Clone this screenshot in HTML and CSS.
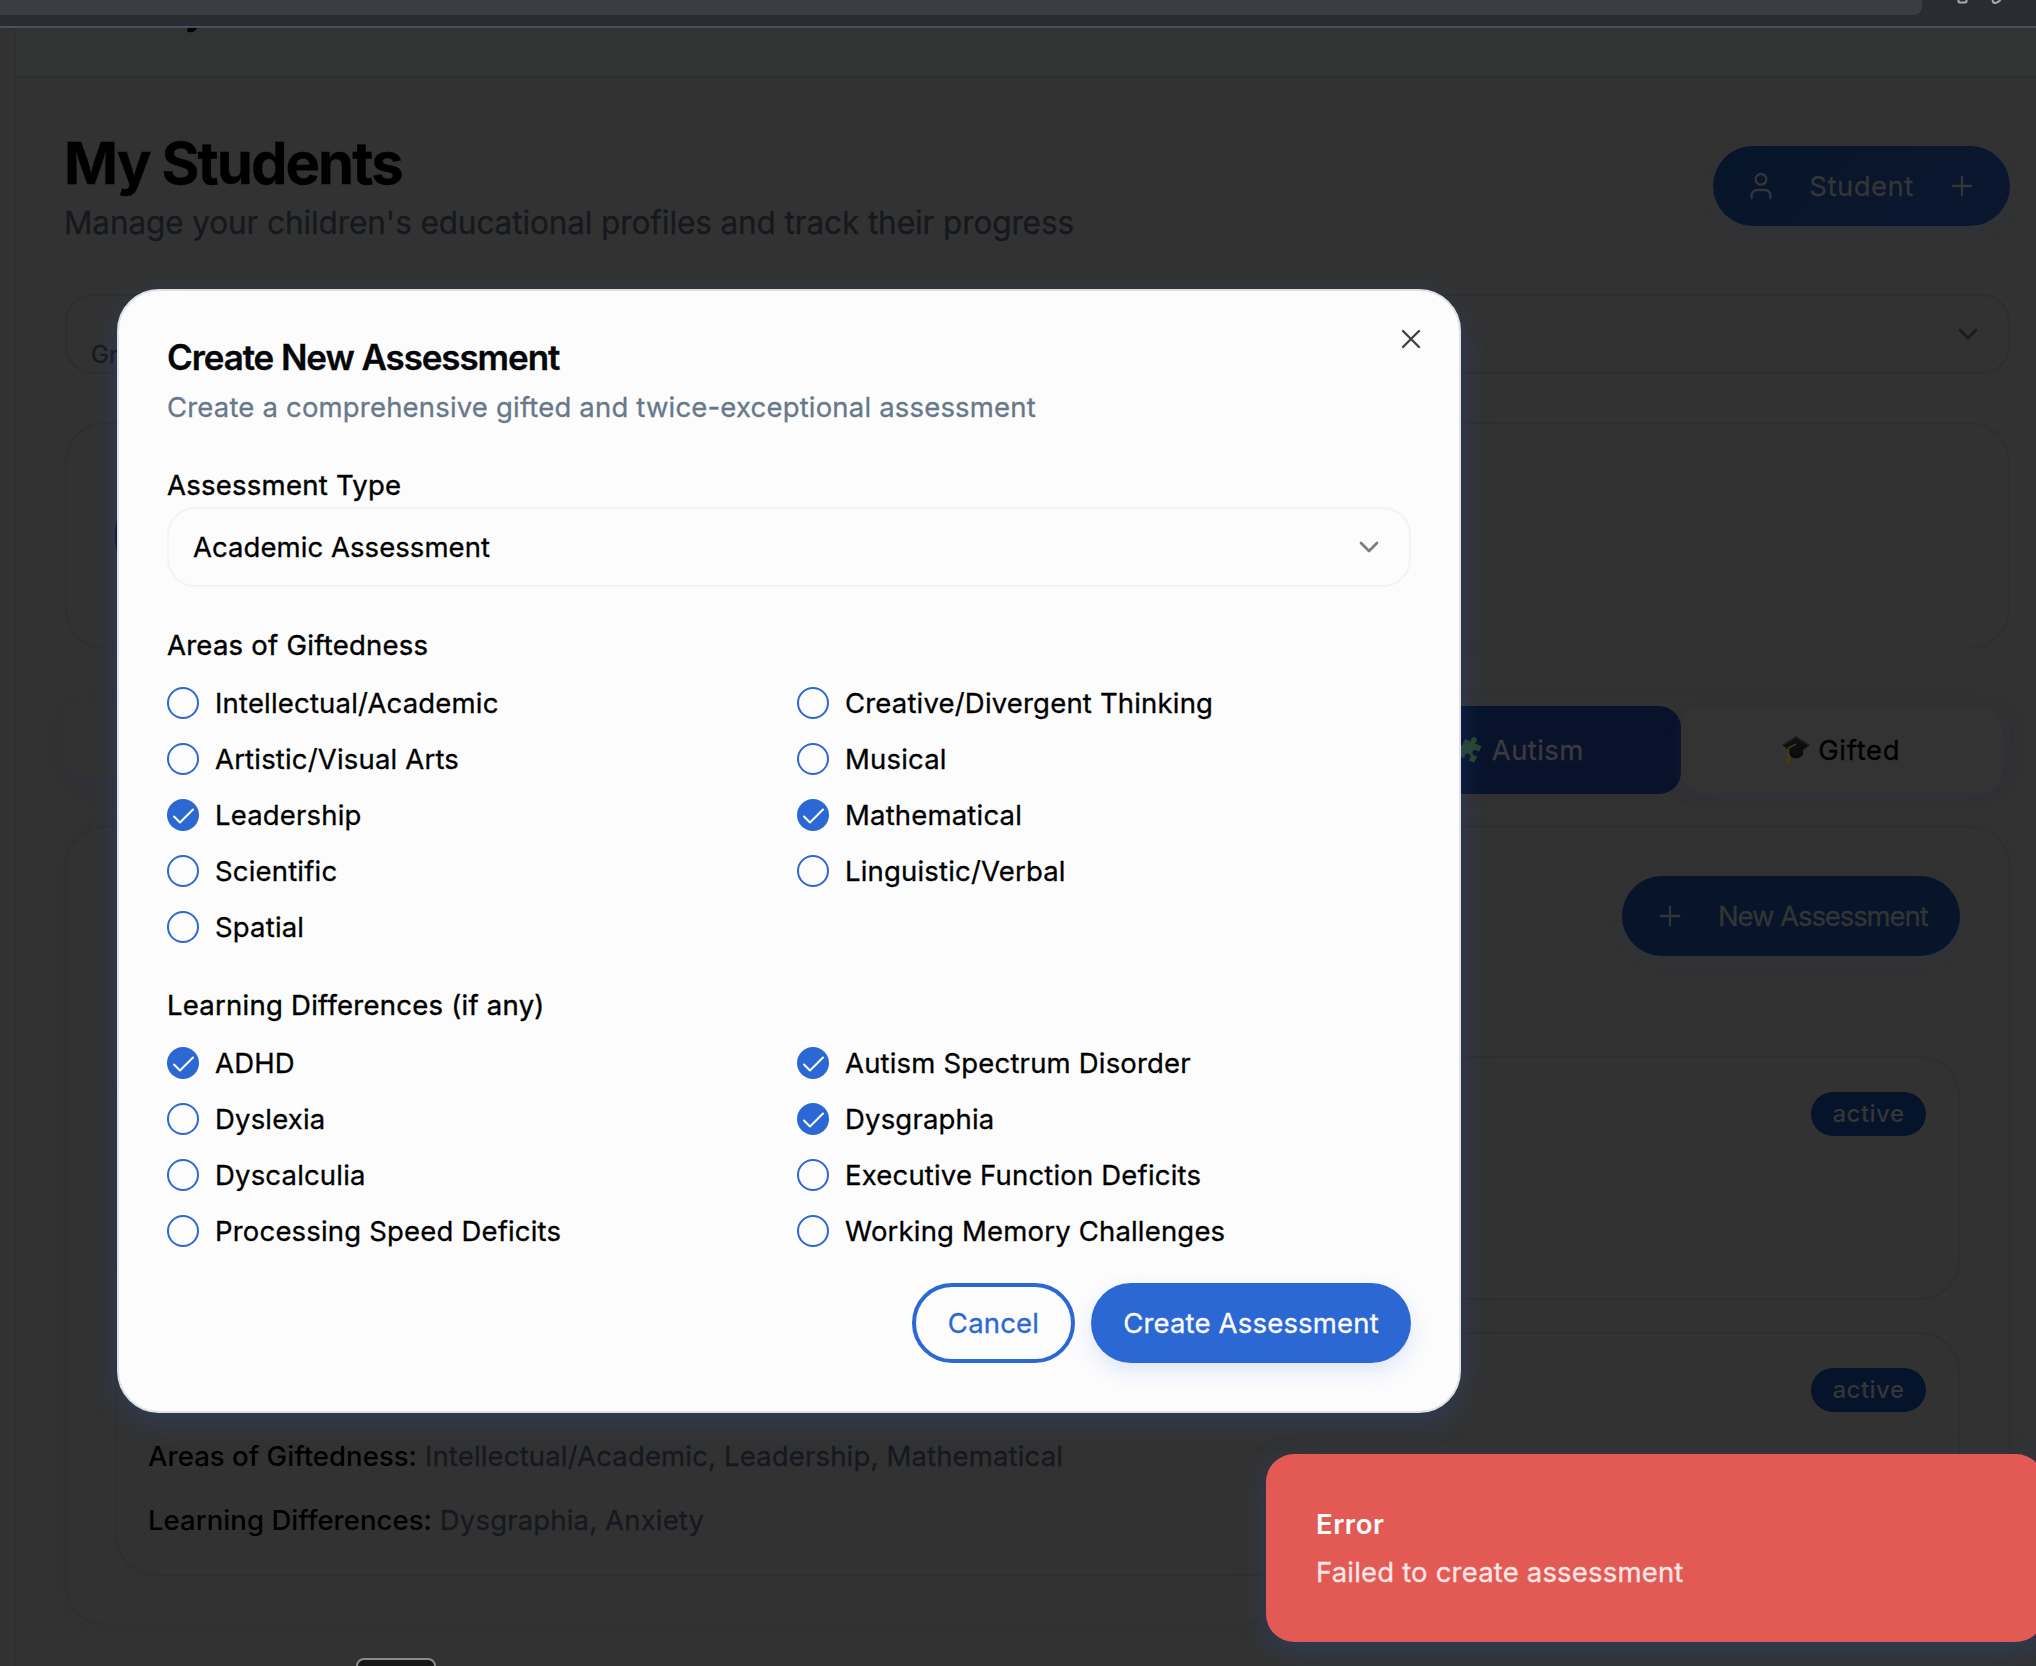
FILE: index.html
```html
<!DOCTYPE html>
<html lang="en">
<head>
<meta charset="utf-8">
<title>My Students</title>
<link rel="stylesheet" href="styles.css">
</head>
<body>
<div class="browser">
  <div class="address"></div>
  <svg class="browser-icon" width="12" height="6" viewBox="0 0 12 6"><path d="M1.5 0v1.5a1 1 0 0 0 1 1h6a1 1 0 0 0 1-1V0"/></svg>
  <svg class="browser-icon" width="12" height="6" viewBox="0 0 12 6"><path d="M1.5 0Q2 3 4 3T9.500 0"/></svg>
</div>
<div class="app">
  <aside class="sidebar"></aside>
  <div class="main">
    <header class="header"><span class="brand">y</span></header>
    <div class="content">
      <div class="heading">
        <div>
          <h1>My Students</h1>
          <p class="lead">Manage your children's educational profiles and track their progress</p>
        </div>
        <div class="pill student-btn">
          <svg class="icon" viewBox="0 0 24 24"><path d="M19 21v-2a4 4 0 0 0-4-4H9a4 4 0 0 0-4 4v2"/><circle cx="12" cy="7" r="4"/></svg>
          <span>Student</span>
          <svg class="icon" viewBox="0 0 24 24"><path d="M5 12h14M12 5v14"/></svg>
        </div>
      </div>
      <div class="student-select">
        <span>Grade</span>
        <svg class="icon chevron" viewBox="0 0 24 24"><path d="m6 9 6 6 6-6"/></svg>
      </div>
      <div class="card profile"><div class="avatar"></div></div>
      <div class="tabs">
        <div class="tab"></div><div class="tab"></div><div class="tab"></div><div class="tab"></div>
        <div class="tab active">
          <svg class="emoji" viewBox="0 0 28 28"><g class="puzzle"><path transform="rotate(24 14 14)" d="M5 6h6.500c-1.800-2-1-5.500 2-5.500s3.800 3.500 2 5.500H23v6.500c-2-1.800-6-1-6 2s4 3.800 6 2V24h-6.500c1.800-2 1-6-2-6s-3.800 4-2 6H5v-6.500c-2 1.800-5.500 1-5.500-2s3.500-3.800 5.500-2z"/></g></svg>
          <span>Autism</span>
        </div>
        <div class="tab gifted">
          <svg class="emoji" viewBox="0 0 28 28"><path fill="#0b0b0c" d="M7 12v7q7 7 14 0v-7z"/><path fill="#0e0e0f" d="M14 .5 27.500 9 14 20 .5 9z"/><path fill="#1c1c1d" d="M14 .5 27.500 9l-1 1L14 2 1.500 10l-1-1z"/><path fill="none" stroke="#49351a" stroke-width="1.600" d="M14 8 6.500 12v8"/><path fill="#49351a" d="M5 18h3l1 9.500H4z"/></svg>
          <span>Gifted</span>
        </div>
      </div>
      <div class="card assessments">
        <div class="card-head">
          <div class="pill new-btn">
            <svg class="icon" viewBox="0 0 24 24"><path d="M5 12h14M12 5v14"/></svg>
            <span>New Assessment</span>
          </div>
        </div>
        <div class="card item"><span class="badge">active</span></div>
        <div class="card item">
          <span class="badge">active</span>
          <p class="fact"><b>Areas of Giftedness:</b> Intellectual/Academic, Leadership, Mathematical</p>
          <p class="fact"><b>Learning Differences:</b> Dysgraphia, Anxiety</p>
        </div>
      </div>
    </div>
  </div>
</div>
<div class="dock"></div>

<div class="modal">
  <svg class="icon close" viewBox="0 0 24 24"><path d="M18 6 6 18M6 6l12 12"/></svg>
  <h2>Create New Assessment</h2>
  <p class="modal-lead">Create a comprehensive gifted and twice-exceptional assessment</p>
  <div class="label">Assessment Type</div>
  <div class="select">
    <span>Academic Assessment</span>
    <svg class="icon chevron" viewBox="0 0 24 24"><path d="m6 9 6 6 6-6"/></svg>
  </div>
  <div class="label">Areas of Giftedness</div>
  <div class="options">
    <div class="option"><i class="box"></i>Intellectual/Academic</div>
    <div class="option"><i class="box"></i>Creative/Divergent Thinking</div>
    <div class="option"><i class="box"></i>Artistic/Visual Arts</div>
    <div class="option"><i class="box"></i>Musical</div>
    <div class="option"><i class="box on"><svg viewBox="0 0 32 32"><path d="m7 17.500 6 6L26 10.500"/></svg></i>Leadership</div>
    <div class="option"><i class="box on"><svg viewBox="0 0 32 32"><path d="m7 17.500 6 6L26 10.500"/></svg></i>Mathematical</div>
    <div class="option"><i class="box"></i>Scientific</div>
    <div class="option"><i class="box"></i>Linguistic/Verbal</div>
    <div class="option"><i class="box"></i>Spatial</div>
  </div>
  <div class="label">Learning Differences (if any)</div>
  <div class="options">
    <div class="option"><i class="box on"><svg viewBox="0 0 32 32"><path d="m7 17.500 6 6L26 10.500"/></svg></i>ADHD</div>
    <div class="option"><i class="box on"><svg viewBox="0 0 32 32"><path d="m7 17.500 6 6L26 10.500"/></svg></i>Autism Spectrum Disorder</div>
    <div class="option"><i class="box"></i>Dyslexia</div>
    <div class="option"><i class="box on"><svg viewBox="0 0 32 32"><path d="m7 17.500 6 6L26 10.500"/></svg></i>Dysgraphia</div>
    <div class="option"><i class="box"></i>Dyscalculia</div>
    <div class="option"><i class="box"></i>Executive Function Deficits</div>
    <div class="option"><i class="box"></i>Processing Speed Deficits</div>
    <div class="option"><i class="box"></i>Working Memory Challenges</div>
  </div>
  <div class="actions">
    <div class="btn cancel">Cancel</div>
    <div class="btn create">Create Assessment</div>
  </div>
</div>

<div class="toast">
  <div class="toast-title">Error</div>
  <div class="toast-text">Failed to create assessment</div>
</div>
</body>
</html>
```
FILE: styles.css
```css
* { box-sizing: border-box; margin: 0; padding: 0; }

body {
  position: relative;
  width: 2036px;
  height: 1666px;
  overflow: hidden;
  background: #323232;
  color: #000;
  font: 400 27.5px/40px Inter, "Liberation Sans", sans-serif;
  letter-spacing: .18px;
  -webkit-text-stroke: .3px currentColor;
}

.icon {
  width: 32px;
  height: 32px;
  flex: none;
  fill: none;
  stroke: currentColor;
  stroke-width: 1.75;
  stroke-linecap: round;
  stroke-linejoin: round;
}

/* Browser toolbar */
.browser {
  display: flex;
  height: 28px;
  background: #2b2c31;
  border-bottom: 2px solid #4b5061;
}
.address {
  width: 1922px;
  height: 15px;
  margin-right: 35px;
  background: #3c3d42;
  border-radius: 0 0 8px 0;
}
.browser-icon {
  margin-right: 22px;
  fill: none;
  stroke: #a9aaad;
  stroke-width: 2;
}

/* Page frame */
.app { display: flex; height: 1638px; }
.sidebar { width: 16px; border-right: 2px solid #2e302f; }
.main { flex: 1; }
.header {
  height: 50px;
  overflow: hidden;
  background: #313433;
  border-bottom: 2px solid #2b2e2e;
  padding-left: 169px;
}
.brand { display: block; margin-top: -35px; font-size: 34px; font-weight: 700; line-height: 40px; }
.content { padding: 54px 26px 0 49px; }

.heading { display: flex; justify-content: space-between; }
h1 { font-size: 58px; line-height: 62px; font-weight: 700; letter-spacing: -1.95px; margin-left: -1px; }
.lead { margin: 9px 0 0 -1px; font-size: 31.5px; line-height: 40px; letter-spacing: -.1px; color: #15191e; }

.pill {
  display: flex;
  align-items: center;
  height: 80px;
  border-radius: 40px;
  background: #07142a;
  color: #343536;
  box-shadow: 0 6px 14px rgba(43, 52, 75, .3);
}
.student-btn {
  width: 297px;
  margin-top: 14px;
  padding: 0 32px;
  justify-content: space-between;
  background: linear-gradient(135deg, #071529, #0b172f);
  letter-spacing: .5px;
}

.student-select {
  display: flex;
  align-items: center;
  justify-content: space-between;
  height: 80px;
  margin-top: 51px;
  padding: 0 24px;
  border: 2px solid #2e2e2f;
  border-radius: 28px;
  color: #191a1c;
}
.student-select span { margin-top: 41px; font-size: 24px; color: #15181f; }
.student-select .chevron { stroke-width: 2; }

.card { border: 2px solid #2e2f30; border-radius: 40px; }
.profile { height: 227px; margin-top: 48px; padding: 48px; }
.avatar { width: 128px; height: 128px; border-radius: 50%; background: #071535; }

.tabs {
  display: flex;
  height: 80px;
  margin-top: 49px;
  padding: 8px 8px 0;
  border-radius: 28px;
  box-shadow: 0 8px 16px rgba(43, 50, 70, .35);
}
.tab {
  flex: 1;
  display: flex;
  align-items: center;
  justify-content: center;
  gap: 8px;
  height: 88px;
  border-radius: 22px;
}
.tab.active { background: #08132b; color: #3a3b3e; letter-spacing: .4px; }
.tab.gifted { background: #333; letter-spacing: .7px; box-shadow: 0 4px 12px rgba(43, 50, 75, .3); }
.emoji { width: 28px; height: 28px; flex: none; }
.puzzle { fill: #29452f; }

.assessments { height: 799px; margin-top: 48px; padding: 48px; box-shadow: 0 3px 8px rgba(43, 50, 60, .25); }
.card-head { display: flex; justify-content: flex-end; height: 180px; }
.new-btn { width: 338px; padding-left: 32px; letter-spacing: -1.1px; color: #333435; }
.new-btn span { margin-left: 32px; }
.item { position: relative; height: 244px; }
.item + .item { margin-top: 32px; padding: 102px 31px 0; }
.badge {
  position: absolute;
  top: 34px;
  right: 32px;
  width: 115px;
  height: 44px;
  border-radius: 22px;
  background: #06142b;
  color: #343637;
  font-size: 24px;
  font-weight: 500;
  line-height: 44px;
  letter-spacing: .5px;
  text-align: center;
  -webkit-text-stroke: 0;
}
.fact { height: 64px; color: #15191f; letter-spacing: .16px; }
.fact b { font-weight: 500; letter-spacing: .05px; color: #000; -webkit-text-stroke: 0; }

.dock {
  position: absolute;
  left: 356px;
  top: 1658px;
  width: 80px;
  height: 40px;
  border: 2px solid #8c8c8c;
  border-radius: 8px;
  background: #171717;
}

/* Dialog */
.modal {
  position: absolute;
  left: 117px;
  top: 289px;
  width: 1344px;
  height: 1124px;
  padding: 44px 48px 0;
  border: 2px solid #dfe1e6;
  border-radius: 42px;
  background: #fcfcfd;
  box-shadow: 0 8px 28px rgba(43, 90, 180, .3);
}
.close { position: absolute; right: 32px; top: 32px; color: #404040; }
h2 { font-size: 35px; line-height: 44px; font-weight: 600; letter-spacing: -1.1px; color: #05070a; }
.modal-lead { margin-top: 8px; color: #67788b; letter-spacing: .18px; }
.label { margin-top: 38px; letter-spacing: .25px; -webkit-text-stroke-width: .4px; }
.select {
  display: flex;
  align-items: center;
  justify-content: space-between;
  height: 80px;
  margin-top: 2px;
  padding: 0 24px 0 24px;
  border: 2px solid #f3f3f4;
  border-radius: 28px;
  letter-spacing: .06px;
}
.select .chevron { color: #7c7c7c; stroke-width: 2; }
.options {
  display: grid;
  grid-template-columns: 1fr 1fr;
  column-gap: 16px;
  row-gap: 16px;
  margin-top: 18px;
}
.option { display: flex; align-items: center; gap: 16px; height: 40px; }
.box { width: 32px; height: 32px; border: 2px solid #2b68d4; border-radius: 50%; }
.box.on { border: 0; background: #2b68d4; }
.box svg { display: block; fill: none; stroke: #fff; stroke-width: 2; stroke-linecap: round; stroke-linejoin: round; }
.actions { display: flex; justify-content: flex-end; gap: 16px; margin-top: 32px; }
.btn { height: 80px; border-radius: 40px; line-height: 80px; text-align: center; }
.cancel { width: 163px; border: 4px solid #2b68d4; line-height: 72px; color: #2b68d4; }
.create { width: 320px; background: #2b68d4; color: #fcfcfd; box-shadow: 0 8px 20px rgba(43, 104, 214, .15); }

/* Notification */
.toast {
  position: absolute;
  left: 1266px;
  top: 1454px;
  width: 778px;
  height: 188px;
  padding: 50px 50px 0;
  border-radius: 28px;
  background: #e35a54;
  color: #fcfcfd;
  box-shadow: 0 8px 28px rgba(43, 90, 180, .3);
}
.toast-title { font-weight: 600; letter-spacing: .5px; -webkit-text-stroke: 0; }
.toast-text { margin-top: 8px; color: #f9e6e6; }
```
